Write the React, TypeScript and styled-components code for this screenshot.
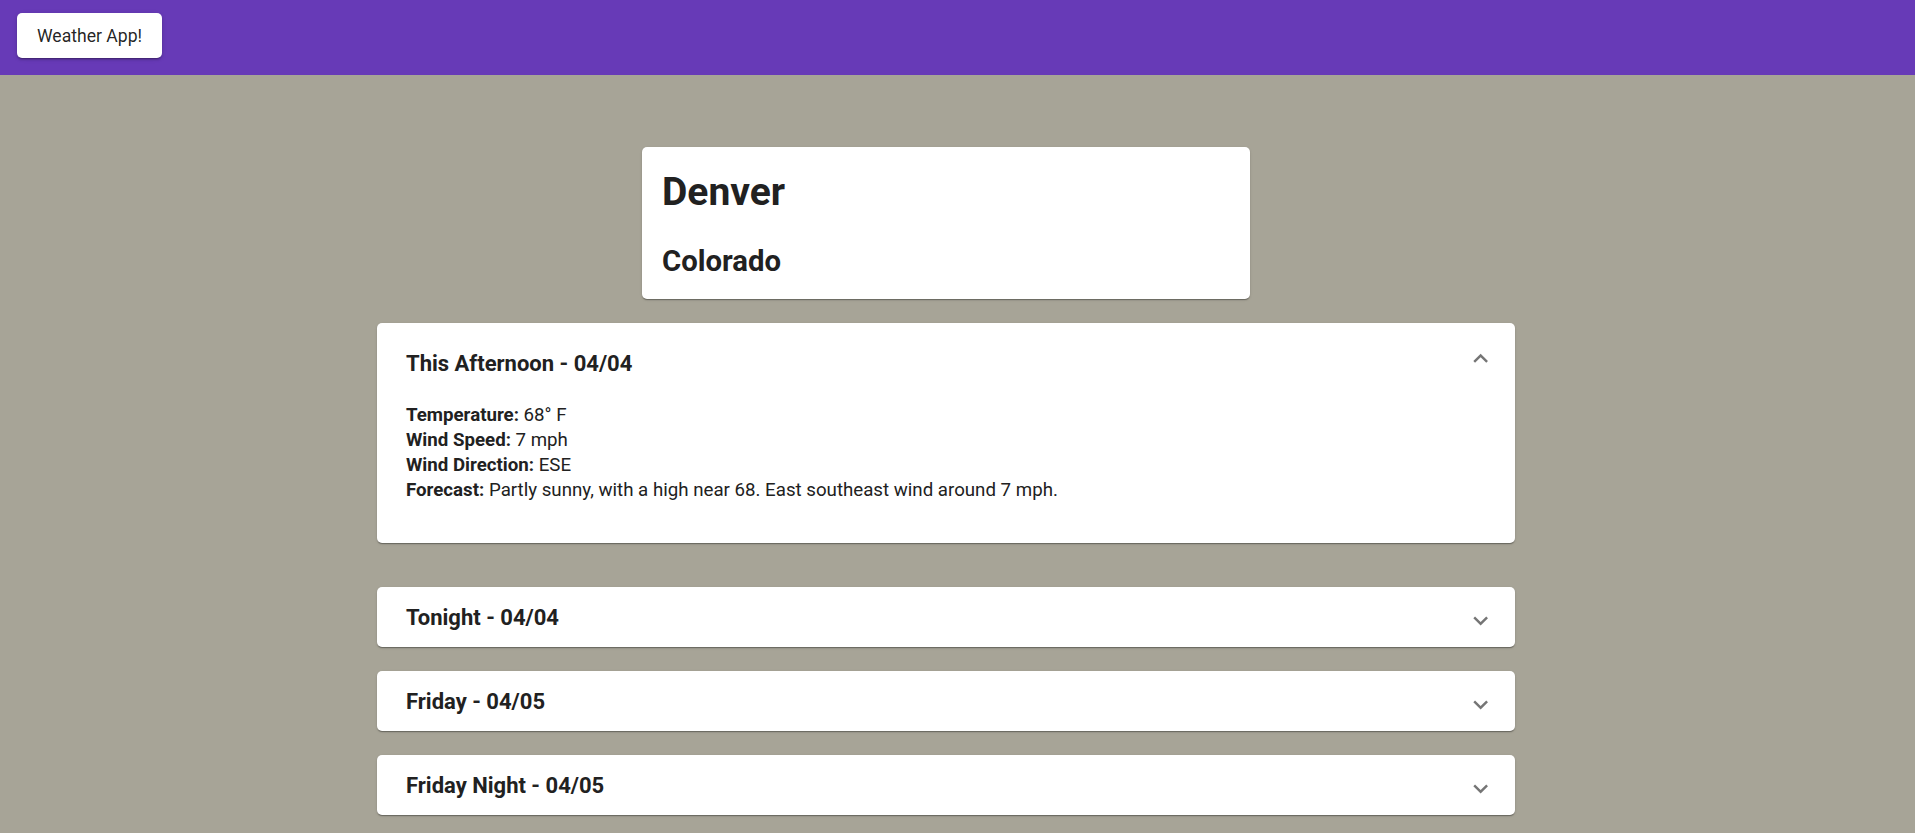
import React from "react";
import styled, { createGlobalStyle } from "styled-components";

const GlobalStyle = createGlobalStyle`
  html, body { margin: 0; padding: 0; }
  body {
    background: #a7a497;
    font-family: Roboto, "Liberation Sans", sans-serif;
    color: rgba(0, 0, 0, 0.87);
  }
`;

const AppBar = styled.header`
  height: 75px;
  box-sizing: border-box;
  background: #673ab7;
  display: flex;
  align-items: flex-start;
  padding: 13px 0 0 17px;
`;

const BrandButton = styled.button`
  height: 45px;
  padding: 0 20px;
  background: #fff;
  border: none;
  border-radius: 5px;
  box-shadow: 0 3px 1px -2px rgba(0, 0, 0, 0.2), 0 2px 2px 0 rgba(0, 0, 0, 0.14),
    0 1px 5px 0 rgba(0, 0, 0, 0.12);
  font-family: Roboto, sans-serif;
  font-size: 17.6px;
  color: rgba(0, 0, 0, 0.87);
  cursor: pointer;
`;

const Page = styled.div`
  display: flex;
  justify-content: center;
  padding: 72px 23px 9px 0;
`;

const Main = styled.main`
  width: 1138px;
  display: flex;
  flex-direction: column;
  align-items: center;
`;

const Card = styled.section`
  background: #fff;
  border-radius: 5px;
  box-shadow: 0 2px 1px -1px rgba(0, 0, 0, 0.2), 0 1px 1px 0 rgba(0, 0, 0, 0.14),
    0 1px 3px 0 rgba(0, 0, 0, 0.12);
`;

const LocationCard = styled(Card)`
  width: 608px;
  box-sizing: border-box;
  height: 152px;
  padding: 22px 20px 0 20px;
  margin-bottom: 24px;
`;

const City = styled.h1`
  margin: 0;
  font-size: 39px;
  line-height: 46px;
  font-weight: 700;
  color: #212121;
`;

const State = styled.h2`
  margin: 27.7px 0 0;
  font-size: 29.3px;
  line-height: 36px;
  font-weight: 700;
  color: #212121;
`;

const Accordion = styled(Card)<{ $expanded: boolean }>`
  width: 100%;
  margin-bottom: ${(p) => (p.$expanded ? 44 : 24)}px;
  &:last-child { margin-bottom: 0; }
`;

const Summary = styled.div<{ $expanded: boolean }>`
  height: ${(p) => (p.$expanded ? 80 : 60)}px;
  box-sizing: border-box;
  display: flex;
  align-items: flex-start;
  justify-content: space-between;
  padding: 0 20px 0 29px;
  cursor: pointer;
`;

const PeriodTitle = styled.h3<{ $expanded: boolean }>`
  margin: ${(p) => (p.$expanded ? 27.5 : 17.5)}px 0 0;
  font-size: 22px;
  line-height: 26px;
  font-weight: 700;
  color: #212121;
`;

const IconWrap = styled.span<{ $expanded: boolean }>`
  display: flex;
  width: 29.3px;
  height: 29.3px;
  margin-top: ${(p) => (p.$expanded ? 20.7 : 19)}px;
  color: rgba(0, 0, 0, 0.54);
  transform: rotate(${(p) => (p.$expanded ? 180 : 0)}deg);
  svg { width: 100%; height: 100%; fill: currentColor; }
`;

const Details = styled.div`
  padding: 0 29px 40px 29px;
  font-size: 18.7px;
  line-height: 25px;
  color: #212121;
`;

const Line = styled.div``;

const Label = styled.b`
  font-weight: 700;
`;

const ExpandIcon = () => (
  <svg viewBox="0 0 24 24" aria-hidden="true">
    <path d="M16.59 8.59 12 13.17 7.41 8.59 6 10l6 6 6-6z" />
  </svg>
);

type Period = { name: string; date: string };

const periods: Period[] = [
  { name: "This Afternoon", date: "04/04" },
  { name: "Tonight", date: "04/04" },
  { name: "Friday", date: "04/05" },
  { name: "Friday Night", date: "04/05" },
  { name: "Saturday", date: "04/06" },
  { name: "Saturday Night", date: "04/06" },
  { name: "Sunday", date: "04/07" },
  { name: "Sunday Night", date: "04/07" },
  { name: "Monday", date: "04/08" },
  { name: "Monday Night", date: "04/08" },
  { name: "Tuesday", date: "04/09" },
  { name: "Tuesday Night", date: "04/09" },
  { name: "Wednesday", date: "04/10" },
  { name: "Wednesday Night", date: "04/10" },
];

function PeriodAccordion({ period, expanded }: { period: Period; expanded: boolean }) {
  return (
    <Accordion $expanded={expanded}>
      <Summary $expanded={expanded}>
        <PeriodTitle $expanded={expanded}>
          {period.name} - {period.date}
        </PeriodTitle>
        <IconWrap $expanded={expanded}>
          <ExpandIcon />
        </IconWrap>
      </Summary>
      {expanded && (
        <Details>
          <Line>
            <Label>Temperature:</Label> 68° F
          </Line>
          <Line>
            <Label>Wind Speed:</Label> 7 mph
          </Line>
          <Line>
            <Label>Wind Direction:</Label> ESE
          </Line>
          <Line>
            <Label>Forecast:</Label> Partly sunny, with a high near 68. East southeast wind around 7 mph.
          </Line>
        </Details>
      )}
    </Accordion>
  );
}

export default function App() {
  return (
    <>
      <GlobalStyle />
      <AppBar>
        <BrandButton>Weather App!</BrandButton>
      </AppBar>
      <Page>
        <Main>
          <LocationCard>
            <City>Denver</City>
            <State>Colorado</State>
          </LocationCard>
          {periods.map((p, i) => (
            <PeriodAccordion key={p.name} period={p} expanded={i === 0} />
          ))}
        </Main>
      </Page>
    </>
  );
}
